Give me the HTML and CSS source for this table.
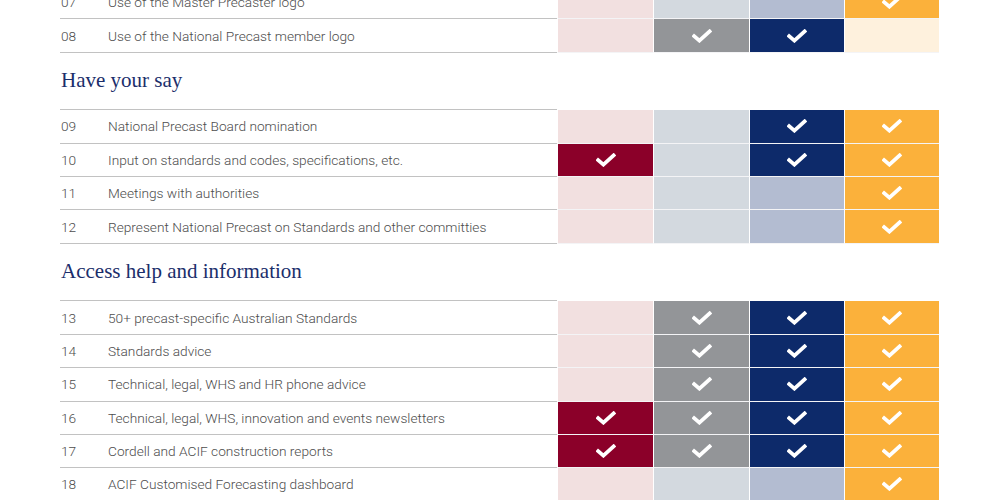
FILE: index.html
```html
<!DOCTYPE html>
<html lang="en">
<head>
<meta charset="utf-8">
<title>Membership benefits</title>
<link rel="stylesheet" href="styles.css">
</head>
<body>
<svg width="0" height="0" class="defs" aria-hidden="true">
  <symbol id="tick" viewBox="0 0 20 14">
    <path d="M2.2 7.2 L7.4 11.6 L17.6 2.4" fill="none" stroke="#fff" stroke-width="3.8" stroke-linecap="square" stroke-linejoin="miter"/>
  </symbol>
</svg>
<main class="page">
  <section class="table table-first">
    <div class="row"><div class="label"><span class="num">07</span><span class="desc">Use of the Master Precaster logo</span></div><div class="cell c1"></div><div class="cell c2"></div><div class="cell c3"></div><div class="cell c4 on"><svg class="tick"><use href="#tick"/></svg></div></div>
    <div class="row"><div class="label"><span class="num">08</span><span class="desc">Use of the National Precast member logo</span></div><div class="cell c1"></div><div class="cell c2 on"><svg class="tick"><use href="#tick"/></svg></div><div class="cell c3 on"><svg class="tick"><use href="#tick"/></svg></div><div class="cell c4"></div></div>
  </section>

  <h2 class="heading">Have your say</h2>

  <section class="table">
    <div class="row"><div class="label"><span class="num">09</span><span class="desc">National Precast Board nomination</span></div><div class="cell c1"></div><div class="cell c2"></div><div class="cell c3 on"><svg class="tick"><use href="#tick"/></svg></div><div class="cell c4 on"><svg class="tick"><use href="#tick"/></svg></div></div>
    <div class="row"><div class="label"><span class="num">10</span><span class="desc">Input on standards and codes, specifications, etc.</span></div><div class="cell c1 on"><svg class="tick"><use href="#tick"/></svg></div><div class="cell c2"></div><div class="cell c3 on"><svg class="tick"><use href="#tick"/></svg></div><div class="cell c4 on"><svg class="tick"><use href="#tick"/></svg></div></div>
    <div class="row"><div class="label"><span class="num">11</span><span class="desc">Meetings with authorities</span></div><div class="cell c1"></div><div class="cell c2"></div><div class="cell c3"></div><div class="cell c4 on"><svg class="tick"><use href="#tick"/></svg></div></div>
    <div class="row"><div class="label"><span class="num">12</span><span class="desc">Represent National Precast on Standards and other committies</span></div><div class="cell c1"></div><div class="cell c2"></div><div class="cell c3"></div><div class="cell c4 on"><svg class="tick"><use href="#tick"/></svg></div></div>
  </section>

  <h2 class="heading">Access help and information</h2>

  <section class="table">
    <div class="row"><div class="label"><span class="num">13</span><span class="desc">50+ precast-specific Australian Standards</span></div><div class="cell c1"></div><div class="cell c2 on"><svg class="tick"><use href="#tick"/></svg></div><div class="cell c3 on"><svg class="tick"><use href="#tick"/></svg></div><div class="cell c4 on"><svg class="tick"><use href="#tick"/></svg></div></div>
    <div class="row"><div class="label"><span class="num">14</span><span class="desc">Standards advice</span></div><div class="cell c1"></div><div class="cell c2 on"><svg class="tick"><use href="#tick"/></svg></div><div class="cell c3 on"><svg class="tick"><use href="#tick"/></svg></div><div class="cell c4 on"><svg class="tick"><use href="#tick"/></svg></div></div>
    <div class="row"><div class="label"><span class="num">15</span><span class="desc">Technical, legal, WHS and HR phone advice</span></div><div class="cell c1"></div><div class="cell c2 on"><svg class="tick"><use href="#tick"/></svg></div><div class="cell c3 on"><svg class="tick"><use href="#tick"/></svg></div><div class="cell c4 on"><svg class="tick"><use href="#tick"/></svg></div></div>
    <div class="row"><div class="label"><span class="num">16</span><span class="desc">Technical, legal, WHS, innovation and events newsletters</span></div><div class="cell c1 on"><svg class="tick"><use href="#tick"/></svg></div><div class="cell c2 on"><svg class="tick"><use href="#tick"/></svg></div><div class="cell c3 on"><svg class="tick"><use href="#tick"/></svg></div><div class="cell c4 on"><svg class="tick"><use href="#tick"/></svg></div></div>
    <div class="row"><div class="label"><span class="num">17</span><span class="desc">Cordell and ACIF construction reports</span></div><div class="cell c1 on"><svg class="tick"><use href="#tick"/></svg></div><div class="cell c2 on"><svg class="tick"><use href="#tick"/></svg></div><div class="cell c3 on"><svg class="tick"><use href="#tick"/></svg></div><div class="cell c4 on"><svg class="tick"><use href="#tick"/></svg></div></div>
    <div class="row"><div class="label"><span class="num">18</span><span class="desc">ACIF Customised Forecasting dashboard</span></div><div class="cell c1"></div><div class="cell c2"></div><div class="cell c3"></div><div class="cell c4 on"><svg class="tick"><use href="#tick"/></svg></div></div>
  </section>
</main>
</body>
</html>
```

FILE: styles.css
```css
* {
  box-sizing: border-box;
}

html, body {
  margin: 0;
  padding: 0;
  background: #ffffff;
}

body {
  width: 1000px;
  height: 500px;
  overflow: hidden;
  font-family: Roboto, "Liberation Sans", Arial, sans-serif;
}

.defs {
  position: absolute;
  width: 0;
  height: 0;
}

.page {
  padding-left: 60px;
  width: 939px;
}

.table-first {
  margin-top: -14px;
}

.table:not(.table-first) {
  border-top: 1px solid transparent;
  position: relative;
}

.table:not(.table-first)::before {
  content: "";
  position: absolute;
  top: -1px;
  left: 0;
  width: 497px;
  height: 1px;
  background: #c2c2c2;
}

.row {
  display: grid;
  grid-template-columns: 497px 96px 96px 95px 95px;
  height: 33.4px;
}

.label {
  display: flex;
  align-items: center;
  border-bottom: 1px solid #c2c2c2;
  font-size: 13.7px;
  font-weight: 300;
  color: #4d4d4d;
}

.num {
  width: 48px;
  flex: none;
  padding-left: 1px;
}

.desc {
  white-space: nowrap;
}

.cell {
  border-left: 1px solid #ffffff;
  border-bottom: 1px solid #f4f4f6;
  display: flex;
  align-items: center;
  justify-content: center;
}

.tick {
  width: 20px;
  height: 14px;
  display: block;
}

.c1 { background: #f2e0e0; }
.c1.on { background: #8b0029; }
.c2 { background: #d3d9df; }
.c2.on { background: #939598; }
.c3 { background: #b3bcd1; }
.c3.on { background: #0d2a6a; }
.c4 { background: #fef1dd; }
.c4.on { background: #fbb13b; }

.heading {
  margin: 0;
  height: 56.5px;
  display: flex;
  align-items: center;
  font-family: "Liberation Serif", "Times New Roman", serif;
  font-weight: 400;
  font-size: 21px;
  color: #1b2e6b;
  padding-left: 1px;
  padding-bottom: 1px;
}
```
